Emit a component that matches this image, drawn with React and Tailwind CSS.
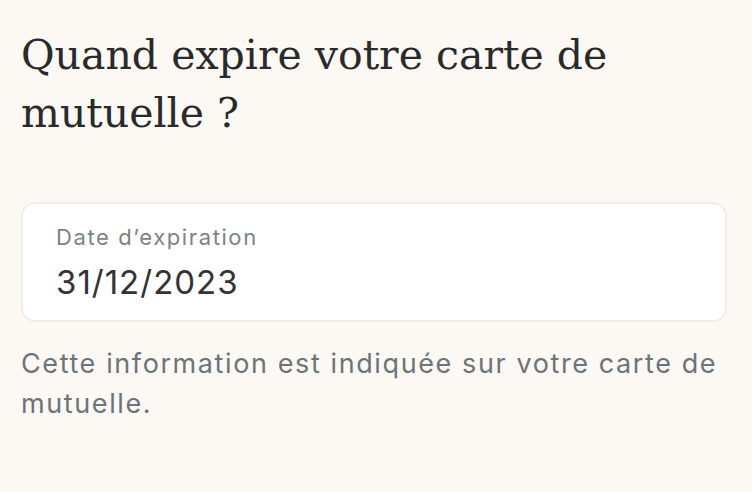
export default function App() {
    return (
        <main className="min-h-screen w-full bg-[#fcf9f4] pl-[21px] pr-[25px] pt-[26px]">
            <h1
                className="text-[41px] leading-[58px] text-[#2a2a2a]"
                style={{ fontFamily: '"DejaVu Serif", serif' }}
            >
                Quand expire votre carte de mutuelle&nbsp;?
            </h1>

            <div
                className="mt-[60px] rounded-[14px] border-2 border-[#f1ede8] bg-white pl-[33px] pt-[18px] pb-[18px]"
                style={{ fontFamily: 'Inter, "Liberation Sans", sans-serif' }}
            >
                <div className="text-[22px] leading-[30px] tracking-[1.6px] text-[#7b8386]">
                    Date d’expiration
                </div>
                <div className="mt-[10px] text-[33px] leading-[40px] tracking-[1px] text-[#333333]">
                    31/12/2023
                </div>
            </div>

            <p
                className="mt-[22px] text-[27px] leading-[40px] tracking-[1.6px] text-[#6c7478]"
                style={{ fontFamily: 'Inter, "Liberation Sans", sans-serif' }}
            >
                Cette information est indiquée sur votre carte de mutuelle.
            </p>
        </main>
    );
}
